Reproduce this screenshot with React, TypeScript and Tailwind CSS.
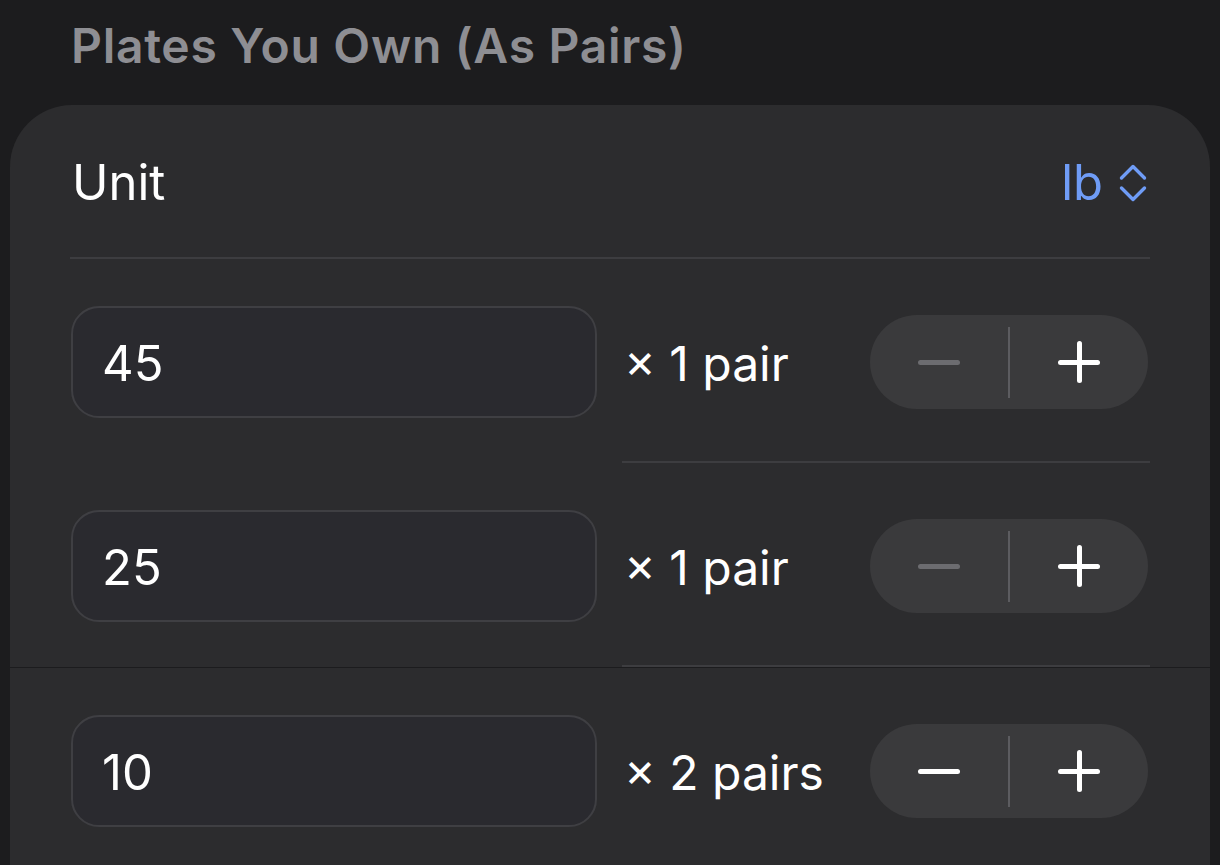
import { useState } from "react";

type Plate = { weight: string; count: number };

const initialPlates: Plate[] = [
  { weight: "45", count: 1 },
  { weight: "25", count: 1 },
  { weight: "10", count: 2 },
];

const UpDownChevron = () => (
  <svg width="28" height="40" viewBox="0 0 28 40" fill="none">
    <polyline
      points="2.5,15 14,3.5 25.5,15"
      stroke="#6f9cf6"
      strokeWidth="3.4"
      strokeLinecap="round"
      strokeLinejoin="round"
    />
    <polyline
      points="2.5,25 14,36.5 25.5,25"
      stroke="#6f9cf6"
      strokeWidth="3.4"
      strokeLinecap="round"
      strokeLinejoin="round"
    />
  </svg>
);

const Stepper = (props: {
  value: number;
  onMinus: () => void;
  onPlus: () => void;
}) => {
  const canMinus = props.value > 1;
  return (
    <div className="flex h-[94px] w-[278px] items-center rounded-full bg-[#3a3a3c]">
      <button
        className="flex h-full flex-1 items-center justify-center"
        onClick={props.onMinus}
        disabled={!canMinus}
      >
        <span
          className={
            canMinus
              ? "block h-[5px] w-[42px] rounded-full bg-white"
              : "block h-[5px] w-[42px] rounded-full bg-[#6c6c70]"
          }
        />
      </button>
      <div className="h-[71px] w-[2px] bg-[#5c5c60]" />
      <button
        className="relative flex h-full flex-1 items-center justify-center"
        onClick={props.onPlus}
      >
        <span className="block h-[5px] w-[42px] rounded-full bg-white" />
        <span className="absolute block h-[42px] w-[5px] rounded-full bg-white" />
      </button>
    </div>
  );
};

export default function App() {
  const [plates, setPlates] = useState<Plate[]>(initialPlates);

  const setCount = (i: number, delta: number) => {
    setPlates(
      plates.map((p, idx) =>
        idx === i ? { ...p, count: Math.max(1, p.count + delta) } : p
      )
    );
  };

  const setWeight = (i: number, weight: string) => {
    setPlates(plates.map((p, idx) => (idx === i ? { ...p, weight } : p)));
  };

  return (
    <div className="h-[865px] overflow-hidden bg-[#1c1c1e] font-['Inter',sans-serif]">
      <h2 className="pl-[71px] pt-[16px] text-[48px] leading-[60px] font-semibold tracking-[0.7px] text-[#8e8e93]">
        Plates You Own (As Pairs)
      </h2>

      <div className="mx-[10px] mt-[29px] rounded-t-[62px] bg-[#2c2c2e] px-[60px]">
        <div className="flex h-[152px] items-center justify-between pl-[2px] pt-[4px] pr-[3px]">
          <span className="text-[49px] text-white">Unit</span>
          <div className="flex items-center gap-[16px]">
            <span className="text-[49px] text-[#6f9cf6]">lb</span>
            <UpDownChevron />
          </div>
        </div>
        <div className="h-[2px] bg-[#3d3d40]" />

        {plates.map((plate, i) => (
          <div
            key={i}
            className={
              i === 2
                ? "-mx-[60px] border-t border-[#1c1c1e] px-[60px]"
                : ""
            }
          >
            <div className="flex h-[202px] items-center pt-[4px] pl-[1px] pr-[2px]">
              <input
                value={plate.weight}
                onChange={(e) => setWeight(i, e.target.value)}
                className="h-[112px] w-[526px] rounded-[28px] border-2 border-[#3f3f43] bg-[#2a2a2f] pl-[29px] pt-[3px] text-[49px] text-white outline-none"
              />
              <span className="ml-[27px] flex-1 pt-[3px] text-[48px] text-white">
                × {plate.count} {plate.count === 1 ? "pair" : "pairs"}
              </span>
              <Stepper
                value={plate.count}
                onMinus={() => setCount(i, -1)}
                onPlus={() => setCount(i, 1)}
              />
            </div>
            {i < 2 && <div className="ml-[552px] h-[2px] bg-[#3d3d40]" />}
          </div>
        ))}
      </div>
    </div>
  );
}
